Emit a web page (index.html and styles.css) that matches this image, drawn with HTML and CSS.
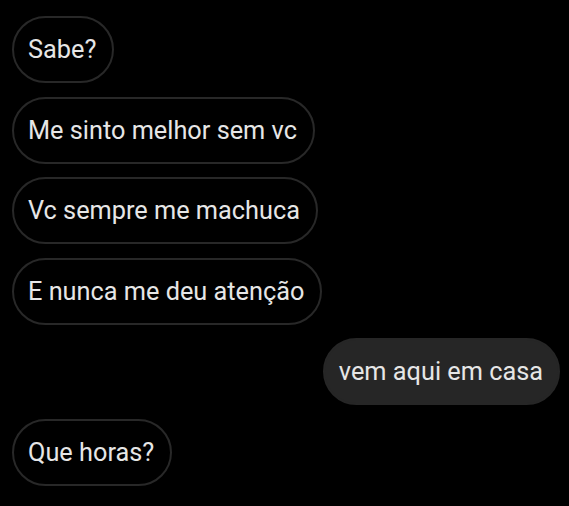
FILE: index.html
```html
<!DOCTYPE html>
<html>
<head>
<meta charset="utf-8">
<link rel="stylesheet" href="styles.css">
</head>
<body>
<div class="chat">
  <div class="msg in">Sabe?</div>
  <div class="msg in">Me sinto melhor sem vc</div>
  <div class="msg in">Vc sempre me machuca</div>
  <div class="msg in">E nunca me deu atenção</div>
  <div class="msg out">vem aqui em casa</div>
  <div class="msg in">Que horas?</div>
</div>
</body>
</html>
```
FILE: styles.css
```css
html, body {
  margin: 0;
  background: #000;
}
.chat {
  display: flex;
  flex-direction: column;
  gap: 13.5px;
  padding: 16px 9px 0 12px;
}
.msg {
  font-family: Roboto, "Noto Sans", sans-serif;
  font-size: 25.3px;
  line-height: 30px;
  color: #e6e6e6;
  padding: 17px 16px 17px 14px;
  border-radius: 34px;
  box-sizing: border-box;
  height: 67px;
}
.in {
  align-self: flex-start;
  border: 2px solid #282828;
}
.out {
  align-self: flex-end;
  background: #262626;
  border: 2px solid #262626;
  padding-left: 14px;
  padding-right: 15px;
}
```
